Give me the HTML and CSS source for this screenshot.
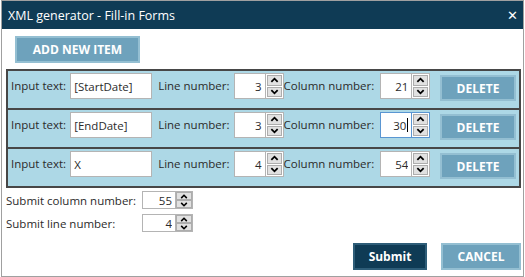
FILE: index.html
```html
<!DOCTYPE html>
<html lang="en">
<head>
    <meta charset="UTF-8">
    <title>XML generator - Fill-in Forms</title>
    <link rel="stylesheet" href="styles.css">
</head>
<body>
    <div class="window">
        <div class="title-bar">
            <span class="title">XML generator - Fill-in Forms</span>
            <span class="close-btn">&#x2715;</span>
        </div>

        <div class="content">
            <button class="btn btn-light add-btn">ADD NEW ITEM</button>

            <!-- Items -->
            <div class="items">
                <div class="item-row">
                    <label>Input text:</label>
                    <input type="text" class="text-field" value="[StartDate]">
                    <label class="line-label">Line number:</label>
                    <div class="spin">
                        <input type="text" class="num-field" value="3">
                        <div class="spin-btns">
                            <span class="spin-up"><svg viewBox="0 0 10 6"><polyline points="1.5,5 5,1.5 8.5,5"/></svg></span>
                            <span class="spin-down"><svg viewBox="0 0 10 6"><polyline points="1.5,1 5,4.5 8.5,1"/></svg></span>
                        </div>
                    </div>
                    <label>Column number:</label>
                    <div class="spin col-spin">
                        <input type="text" class="num-field" value="21">
                        <div class="spin-btns">
                            <span class="spin-up"><svg viewBox="0 0 10 6"><polyline points="1.5,5 5,1.5 8.5,5"/></svg></span>
                            <span class="spin-down"><svg viewBox="0 0 10 6"><polyline points="1.5,1 5,4.5 8.5,1"/></svg></span>
                        </div>
                    </div>
                    <button class="btn btn-light delete-btn">DELETE</button>
                </div>

                <div class="item-row">
                    <label>Input text:</label>
                    <input type="text" class="text-field" value="[EndDate]">
                    <label class="line-label">Line number:</label>
                    <div class="spin">
                        <input type="text" class="num-field" value="3">
                        <div class="spin-btns">
                            <span class="spin-up"><svg viewBox="0 0 10 6"><polyline points="1.5,5 5,1.5 8.5,5"/></svg></span>
                            <span class="spin-down"><svg viewBox="0 0 10 6"><polyline points="1.5,1 5,4.5 8.5,1"/></svg></span>
                        </div>
                    </div>
                    <label>Column number:</label>
                    <div class="spin col-spin">
                        <div class="num-field focused">30<span class="caret"></span></div>
                        <div class="spin-btns focused">
                            <span class="spin-up"><svg viewBox="0 0 10 6"><polyline points="1.5,5 5,1.5 8.5,5"/></svg></span>
                            <span class="spin-down"><svg viewBox="0 0 10 6"><polyline points="1.5,1 5,4.5 8.5,1"/></svg></span>
                        </div>
                    </div>
                    <button class="btn btn-light delete-btn">DELETE</button>
                </div>

                <div class="item-row">
                    <label>Input text:</label>
                    <input type="text" class="text-field" value="X">
                    <label class="line-label">Line number:</label>
                    <div class="spin">
                        <input type="text" class="num-field" value="4">
                        <div class="spin-btns">
                            <span class="spin-up"><svg viewBox="0 0 10 6"><polyline points="1.5,5 5,1.5 8.5,5"/></svg></span>
                            <span class="spin-down"><svg viewBox="0 0 10 6"><polyline points="1.5,1 5,4.5 8.5,1"/></svg></span>
                        </div>
                    </div>
                    <label>Column number:</label>
                    <div class="spin col-spin">
                        <input type="text" class="num-field" value="54">
                        <div class="spin-btns">
                            <span class="spin-up"><svg viewBox="0 0 10 6"><polyline points="1.5,5 5,1.5 8.5,5"/></svg></span>
                            <span class="spin-down"><svg viewBox="0 0 10 6"><polyline points="1.5,1 5,4.5 8.5,1"/></svg></span>
                        </div>
                    </div>
                    <button class="btn btn-light delete-btn">DELETE</button>
                </div>
            </div>

            <!-- Submit position -->
            <div class="submit-fields">
                <div class="submit-row">
                    <label>Submit column number:</label>
                    <div class="spin spin-small">
                        <input type="text" class="num-field" value="55">
                        <div class="spin-btns">
                            <span class="spin-up"><svg viewBox="0 0 10 6"><polyline points="1.5,5 5,1.5 8.5,5"/></svg></span>
                            <span class="spin-down"><svg viewBox="0 0 10 6"><polyline points="1.5,1 5,4.5 8.5,1"/></svg></span>
                        </div>
                    </div>
                </div>
                <div class="submit-row">
                    <label>Submit line number:</label>
                    <div class="spin spin-small">
                        <input type="text" class="num-field" value="4">
                        <div class="spin-btns">
                            <span class="spin-up"><svg viewBox="0 0 10 6"><polyline points="1.5,5 5,1.5 8.5,5"/></svg></span>
                            <span class="spin-down"><svg viewBox="0 0 10 6"><polyline points="1.5,1 5,4.5 8.5,1"/></svg></span>
                        </div>
                    </div>
                </div>
            </div>

            <!-- Action Buttons -->
            <div class="button-group">
                <button class="btn btn-dark submit-btn">Submit</button>
                <button class="btn btn-light cancel-btn">CANCEL</button>
            </div>
        </div>
    </div>
</body>
</html>
```

FILE: styles.css
```css
:root {
    --navy: #0f3b55;
    --steel: #6ea2bc;
    --steel-border: #94bfd2;
    --row-bg: #add8e6;
    --row-border: #474747;
    --text: #2b2b2b;
    --field-border: #b4b4b4;
}

* {
    box-sizing: border-box;
}

body {
    margin: 0;
    background: #ffffff;
    font-family: 'Open Sans', sans-serif;
    font-size: 11.5px;
    color: var(--text);
}

.window {
    width: 523px;
    height: 277px;
    margin-left: 1px;
    border: 1px solid #a0a0a0;
    display: flex;
    flex-direction: column;
}

.title-bar {
    height: 28px;
    background: var(--navy);
    color: #ffffff;
    display: flex;
    align-items: center;
    justify-content: space-between;
    padding: 0 5px 0 6px;
    font-size: 12.5px;
}

.close-btn {
    font-size: 13px;
}

.content {
    flex: 1;
    display: flex;
    flex-direction: column;
    padding: 7px 2px 6px 4px;
}

.btn {
    font-family: inherit;
    font-weight: bold;
    font-size: 12px;
    color: #ffffff;
    height: 27px;
    padding: 0;
    cursor: pointer;
}

.btn-light {
    background: var(--steel);
    border: 2px solid var(--steel-border);
}

.btn-dark {
    background: var(--navy);
    border: 2px solid #2e5d78;
}

.add-btn {
    width: 125px;
    margin-left: 9px;
}

.items {
    margin-top: 6px;
    border: 1px solid var(--row-border);
}

.item-row {
    display: flex;
    align-items: flex-start;
    height: 39px;
    padding: 2px 3px 0 3px;
    background: var(--row-bg);
    border: 1px solid var(--row-border);
}

.item-row label {
    line-height: 26px;
}

.text-field {
    width: 82px;
    height: 26px;
    margin-left: 4px;
    padding: 0 3px;
    border: 1px solid var(--field-border);
    background: #ffffff;
    font-family: inherit;
    font-size: 11.5px;
    color: var(--text);
    outline: none;
}

.line-label {
    margin-left: 6px;
    margin-right: 4px;
}

.spin {
    display: flex;
    height: 26px;
}

.col-spin {
    margin-left: 6px;
}

.num-field {
    width: 32px;
    height: 100%;
    padding: 0 3px;
    border: 1px solid var(--field-border);
    background: #ffffff;
    font-family: inherit;
    font-size: 11.5px;
    color: var(--text);
    text-align: right;
    outline: none;
}

div.num-field {
    display: flex;
    align-items: center;
    justify-content: flex-end;
}

.num-field.focused,
.spin-btns.focused {
    border-color: #5a96d2;
}

.caret {
    width: 1px;
    height: 14px;
    background: #000000;
    margin-left: 1px;
}

.spin-btns {
    width: 18px;
    display: flex;
    flex-direction: column;
    border: 1px solid var(--field-border);
    border-left: none;
    background: #ffffff;
    padding: 1px;
    gap: 1px;
}

.spin-up, .spin-down {
    flex: 1;
    background: #e1e1e1;
    border: 1px solid #adadad;
    display: flex;
    align-items: center;
    justify-content: center;
}

.spin-btns svg {
    width: 9px;
    height: 6px;
    fill: none;
    stroke: #000000;
    stroke-width: 2;
}

.delete-btn {
    width: 76px;
    height: 26px;
    margin-left: auto;
    margin-top: 2px;
}

.submit-fields {
    display: flex;
    flex-direction: column;
    gap: 5px;
    margin-top: 3px;
}

.submit-row {
    display: flex;
    align-items: center;
}

.submit-row label {
    width: 136px;
}

.spin-small {
    height: 18px;
}

.spin-small .num-field {
    width: 34px;
}

.spin-small .spin-btns {
    width: 17px;
    padding: 0;
    gap: 0;
}

.spin-small .spin-btns svg {
    width: 8px;
    height: 5px;
}

.button-group {
    display: flex;
    justify-content: flex-end;
    gap: 14px;
    margin-top: auto;
}

.submit-btn {
    width: 74px;
}

.cancel-btn {
    width: 80px;
}
```
